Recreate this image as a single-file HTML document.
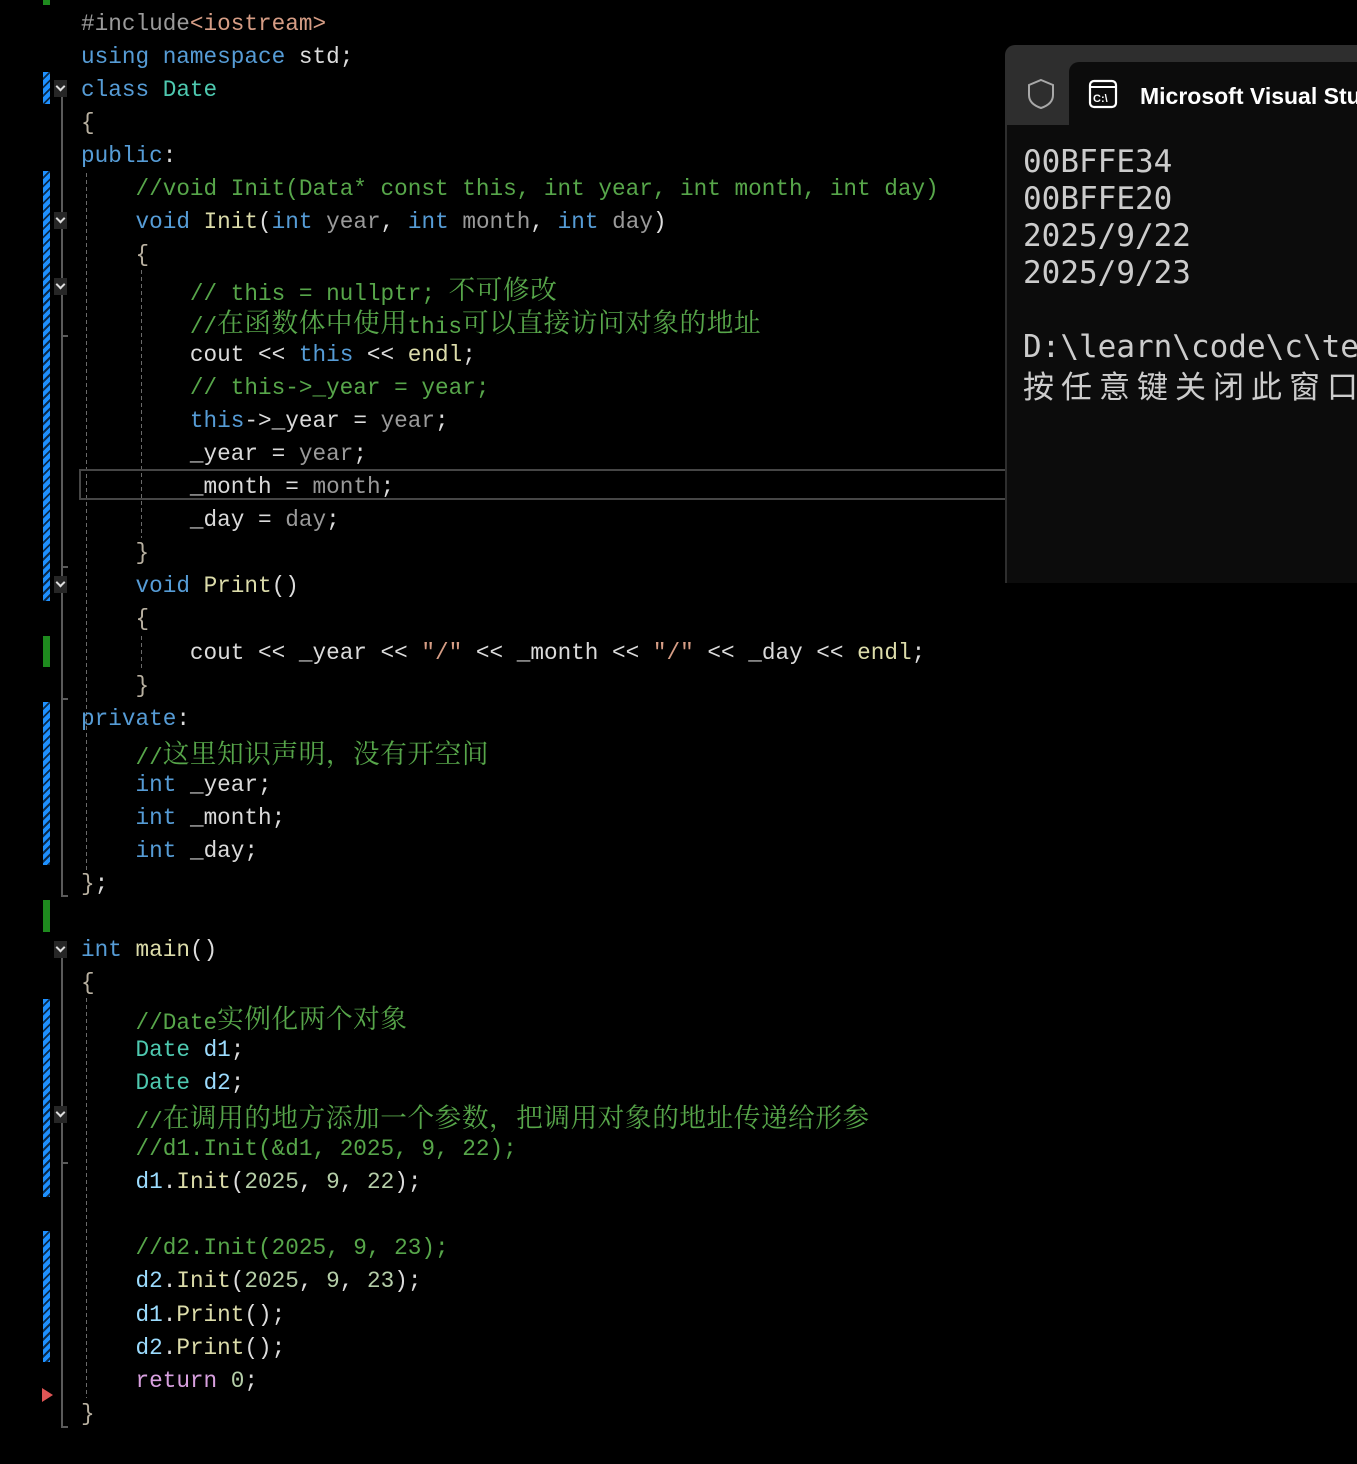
<!DOCTYPE html>
<html><head><meta charset="utf-8">
<style>
html,body{margin:0;padding:0;background:#000;width:1357px;height:1464px;overflow:hidden;position:relative}
.ln{position:absolute;left:81px;height:33px;line-height:33px;white-space:pre;font-family:"Liberation Mono","Noto Sans CJK SC",monospace;font-size:22.7px;color:#dcdcdc;margin-top:3px}
.c{font-family:"Noto Serif CJK SC","Noto Sans CJK SC",sans-serif;font-size:26.6px;letter-spacing:0.6px;position:relative;top:-1.5px}
.k{color:#569cd6}.t{color:#4ec9b0}.f{color:#dcdcaa}.m{color:#57a64a}.p{color:#9a9a9a}.s{color:#d69d85}
.n{color:#b5cea8}.v{color:#9cdcfe}.r{color:#d8a0df}.pp{color:#9b9b9b}.b{color:#b8b0a0}.d{color:#dadada}
.bar{position:absolute;left:43px;width:7px;background:repeating-linear-gradient(135deg,#1e90ff 0 4px,#0a2a4a 4px 6px)}
.g{position:absolute;left:43px;width:7px;background:#1e8a1e}
.chev{position:absolute;left:54px;width:13px;height:17px;background:#262626}
.chev:after{content:"";position:absolute;left:3px;top:3px;width:5px;height:5px;border-right:2px solid #ddd;border-bottom:2px solid #ddd;transform:rotate(45deg)}
.ol{position:absolute;left:61px;width:2px;background:#5a5a5a}
.tick{position:absolute;left:61px;width:7px;height:2px;background:#5a5a5a}
.dg{position:absolute;width:1px;background:repeating-linear-gradient(#6a6a6a 0 4px,transparent 4px 7px)}
</style></head><body>
<div class="g" style="top:0;height:5px"></div>
<div class="bar" style="top:72px;height:32px"></div>
<div class="bar" style="top:171px;height:430px"></div>
<div class="g" style="top:636px;height:31px"></div>
<div class="bar" style="top:702px;height:163px"></div>
<div class="g" style="top:900px;height:32px"></div>
<div class="bar" style="top:999px;height:198px"></div>
<div class="bar" style="top:1231px;height:131px"></div>
<div style="position:absolute;left:42px;top:1388px;width:0;height:0;border-top:7px solid transparent;border-bottom:7px solid transparent;border-left:11px solid #e05555"></div>

<div class="ol" style="top:97px;height:800px"></div><div class="tick" style="top:895px"></div>
<div class="ol" style="top:958px;height:470px"></div><div class="tick" style="top:1426px"></div>
<div class="tick" style="top:335px"></div>
<div class="tick" style="top:566px"></div>
<div class="tick" style="top:698px"></div>
<div class="tick" style="top:1162px"></div>
<div class="chev" style="top:80px"></div>
<div class="chev" style="top:212px"></div>
<div class="chev" style="top:278px"></div>
<div class="chev" style="top:576px"></div>
<div class="chev" style="top:941px"></div>
<div class="chev" style="top:1106px"></div>

<div class="dg" style="left:86px;top:173px;height:697px"></div>
<div class="dg" style="left:86px;top:998px;height:400px"></div>
<div class="dg" style="left:141px;top:270px;height:268px"></div>
<div class="dg" style="left:141px;top:636px;height:32px"></div>

<div style="position:absolute;left:79px;top:469px;width:930px;height:27px;border:2px solid #464646"></div>

<div class="ln" style="top:5px"><span class="pp">#include</span><span class="s">&lt;iostream&gt;</span></div>
<div class="ln" style="top:38px"><span class="k">using namespace</span> std;</div>
<div class="ln" style="top:71px"><span class="k">class</span> <span class="t">Date</span></div>
<div class="ln" style="top:104px"><span class="b">{</span></div>
<div class="ln" style="top:137px"><span class="k">public</span>:</div>
<div class="ln" style="top:170px">    <span class="m">//void Init(Data* const this, int year, int month, int day)</span></div>
<div class="ln" style="top:203px">    <span class="k">void</span> <span class="f">Init</span>(<span class="k">int</span> <span class="p">year</span>, <span class="k">int</span> <span class="p">month</span>, <span class="k">int</span> <span class="p">day</span>)</div>
<div class="ln" style="top:236px">    <span class="b">{</span></div>
<div class="ln" style="top:269px">        <span class="m">// this = nullptr; <span class="c">不可修改</span></span></div>
<div class="ln" style="top:302px">        <span class="m">//<span class="c">在函数体中使用</span>this<span class="c">可以直接访问对象的地址</span></span></div>
<div class="ln" style="top:336px">        cout &lt;&lt; <span class="k">this</span> &lt;&lt; <span class="f">endl</span>;</div>
<div class="ln" style="top:369px">        <span class="m">// this-&gt;_year = year;</span></div>
<div class="ln" style="top:402px">        <span class="k">this</span>-&gt;<span class="d">_year</span> = <span class="p">year</span>;</div>
<div class="ln" style="top:435px">        <span class="d">_year</span> = <span class="p">year</span>;</div>
<div class="ln" style="top:468px">        <span class="d">_month</span> = <span class="p">month</span>;</div>
<div class="ln" style="top:501px">        <span class="d">_day</span> = <span class="p">day</span>;</div>
<div class="ln" style="top:534px">    <span class="b">}</span></div>
<div class="ln" style="top:567px">    <span class="k">void</span> <span class="f">Print</span>()</div>
<div class="ln" style="top:600px">    <span class="b">{</span></div>
<div class="ln" style="top:634px">        cout &lt;&lt; <span class="d">_year</span> &lt;&lt; <span class="s">"/"</span> &lt;&lt; <span class="d">_month</span> &lt;&lt; <span class="s">"/"</span> &lt;&lt; <span class="d">_day</span> &lt;&lt; <span class="f">endl</span>;</div>
<div class="ln" style="top:667px">    <span class="b">}</span></div>
<div class="ln" style="top:700px"><span class="k">private</span>:</div>
<div class="ln" style="top:733px">    <span class="m">//<span class="c">这里知识声明，没有开空间</span></span></div>
<div class="ln" style="top:766px">    <span class="k">int</span> <span class="d">_year</span>;</div>
<div class="ln" style="top:799px">    <span class="k">int</span> <span class="d">_month</span>;</div>
<div class="ln" style="top:832px">    <span class="k">int</span> <span class="d">_day</span>;</div>
<div class="ln" style="top:865px"><span class="b">}</span>;</div>
<div class="ln" style="top:931px"><span class="k">int</span> <span class="f">main</span>()</div>
<div class="ln" style="top:964px"><span class="b">{</span></div>
<div class="ln" style="top:998px">    <span class="m">//Date<span class="c">实例化两个对象</span></span></div>
<div class="ln" style="top:1031px">    <span class="t">Date</span> <span class="v">d1</span>;</div>
<div class="ln" style="top:1064px">    <span class="t">Date</span> <span class="v">d2</span>;</div>
<div class="ln" style="top:1097px">    <span class="m">//<span class="c">在调用的地方添加一个参数，把调用对象的地址传递给形参</span></span></div>
<div class="ln" style="top:1130px">    <span class="m">//d1.Init(&amp;d1, 2025, 9, 22);</span></div>
<div class="ln" style="top:1163px">    <span class="v">d1</span>.<span class="f">Init</span>(<span class="n">2025</span>, <span class="n">9</span>, <span class="n">22</span>);</div>
<div class="ln" style="top:1229px">    <span class="m">//d2.Init(2025, 9, 23);</span></div>
<div class="ln" style="top:1262px">    <span class="v">d2</span>.<span class="f">Init</span>(<span class="n">2025</span>, <span class="n">9</span>, <span class="n">23</span>);</div>
<div class="ln" style="top:1296px">    <span class="v">d1</span>.<span class="f">Print</span>();</div>
<div class="ln" style="top:1329px">    <span class="v">d2</span>.<span class="f">Print</span>();</div>
<div class="ln" style="top:1362px">    <span class="r">return</span> <span class="n">0</span>;</div>
<div class="ln" style="top:1395px"><span class="b">}</span></div>

<!-- console window -->
<div style="position:absolute;left:1005px;top:45px;width:360px;height:538px;background:#2e2e2e;border-radius:10px 0 0 0"></div>
<div style="position:absolute;left:1007px;top:125px;width:360px;height:458px;background:#0c0c0c"></div>
<div style="position:absolute;left:1069px;top:62px;width:300px;height:70px;background:#0c0c0c;border-radius:10px 0 0 0"></div>
<svg style="position:absolute;left:1025px;top:77px" width="32" height="34" viewBox="0 0 32 34"><path d="M16 3 L28 8 V18 C28 25 22 29 16 31 C10 29 4 25 4 18 V8 Z" fill="none" stroke="#a8a8a8" stroke-width="2"/></svg>
<svg style="position:absolute;left:1088px;top:79px" width="30" height="30" viewBox="0 0 30 30"><rect x="2" y="2" width="26" height="26" rx="4" fill="none" stroke="#fff" stroke-width="2.2"/><line x1="2" y1="8" x2="28" y2="8" stroke="#fff" stroke-width="2"/><text x="5" y="23" font-family="Liberation Sans,sans-serif" font-size="11" font-weight="bold" fill="#fff">C:\</text></svg>
<div style="position:absolute;left:1140px;top:80px;font-family:'Liberation Sans',sans-serif;font-size:23px;font-weight:bold;color:#fff;white-space:pre;line-height:32px">Microsoft Visual Studio</div>
<div style="position:absolute;left:1023px;top:144px;font-family:'DejaVu Sans Mono','Noto Sans CJK SC',monospace;font-size:31px;line-height:37px;color:#cccccc;white-space:pre">00BFFE34
00BFFE20
2025/9/22
2025/9/23

D:\learn\code\c\test
<span style="font-family:'Noto Sans CJK SC',sans-serif;letter-spacing:7px">按任意键关闭此窗口</span></div>
</body></html>
